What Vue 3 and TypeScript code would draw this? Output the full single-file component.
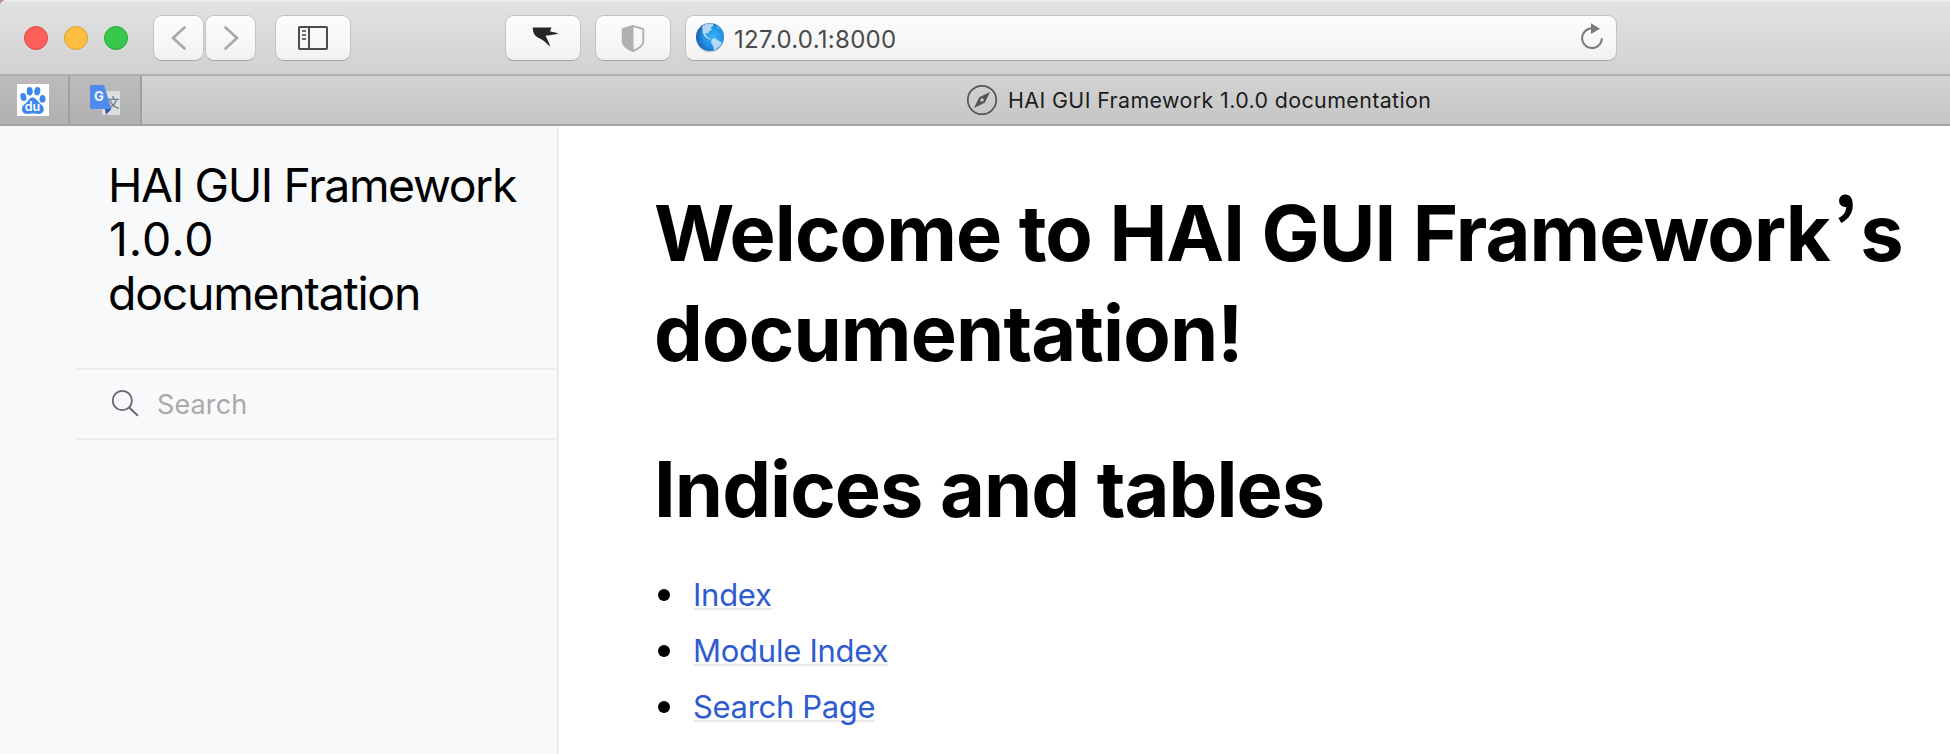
<script setup lang="ts">
interface DocLink {
  label: string
  spacing: string
}

const lights = ['red', 'amber', 'green']
const titleLines = [
  { text: 'HAI GUI Framework', spacing: 'title-a' },
  { text: '1.0.0', spacing: 'title-b' },
  { text: 'documentation', spacing: 'title-c' },
]
const links: DocLink[] = [
  { label: 'Index', spacing: 'normal' },
  { label: 'Module Index', spacing: 'normal' },
  { label: 'Search Page', spacing: 'tight' },
]
</script>

<template>
  <div class="window">
    <header class="toolbar">
      <span class="corner"></span>
      <div class="lights">
        <i v-for="l in lights" :key="l" :class="['light', l]"></i>
      </div>
      <div class="btn nav">
        <svg width="50" height="44" viewBox="0 0 50 44"><path d="M30.500 11.500 19 22l11.500 10.500" fill="none" stroke="#a9a9a9" stroke-width="2.700" stroke-linecap="round" stroke-linejoin="round" /></svg>
      </div>
      <div class="btn nav fwd">
        <svg width="50" height="44" viewBox="0 0 50 44"><path d="M19.500 11.500 31 22 19.500 32.500" fill="none" stroke="#a9a9a9" stroke-width="2.700" stroke-linecap="round" stroke-linejoin="round" /></svg>
      </div>
      <div class="btn panel">
        <svg width="32" height="26" viewBox="0 0 32 26">
          <rect x="2" y="2" width="28" height="22" rx="0.800" fill="none" stroke="#4c4c4c" stroke-width="2" />
          <path d="M12 2v22" stroke="#4c4c4c" stroke-width="2" />
          <path d="M5 6h4M5 10h4M5 14h4" stroke="#6a6a6a" stroke-width="1.800" />
        </svg>
      </div>
      <div class="btn bird">
        <svg width="74" height="44" viewBox="0 0 74 44">
          <path d="M26.800 11.500H45.500L44 15.300C46.500 16.200 49.500 16.500 52.500 17.600C49 18.900 45 19 39.500 19.800C41 22.500 42.700 26.500 44.300 30.800C41 28 38.500 25 34.500 22.800C29.500 20.800 26.600 17.500 26.800 11.500Z" fill="#262626" />
        </svg>
      </div>
      <div class="btn shield">
        <svg width="74" height="44" viewBox="0 0 74 44">
          <path d="M37 9.900 47.300 13.200V25.500C47.300 29.500 43 32.500 37 35C31 32.500 26.700 29.500 26.700 25.500V13.200Z" fill="none" stroke="#b0b0b0" stroke-width="1.900" stroke-linejoin="round" />
          <path d="M37.500 9 26 12.600V25.500C26 30 31 33.500 37.500 36Z" fill="#b0b0b0" />
        </svg>
      </div>
      <div class="address">
        <svg class="globe" width="32" height="34" viewBox="0 0 32 34">
          <defs>
            <radialGradient id="sea" cx="0.62" cy="0.5" r="0.62">
              <stop offset="0" stop-color="#38b1f6" />
              <stop offset="0.6" stop-color="#2190e4" />
              <stop offset="1" stop-color="#1a5fae" />
            </radialGradient>
            <clipPath id="ball"><circle cx="16" cy="16" r="14" /></clipPath>
          </defs>
          <ellipse cx="16" cy="18" rx="13.500" ry="13.300" fill="#8a98a8" opacity="0.450" />
          <circle cx="16" cy="16" r="14" fill="url(#sea)" />
          <g clip-path="url(#ball)" fill="#d5e8f5">
            <path d="M8 5.500 12 2.500 19.500 2.500 19 5 16.500 6.500 18 8.500 15.500 10 14 12.500 11.500 12 12 14.500 14.500 16.500 17 18.300 15.500 18.500 11 16 8.500 11.500 8.500 8Z" opacity="0.800" />
            <path d="M18 17.800 21.500 17.300 25 20 28 21.500 26.500 24.500 23 27.500 20 30 19.500 26 17 21.500Z" opacity="0.800" />
            <path d="M22 4 25.500 7 24 8Z" opacity="0.450" />
          </g>
        </svg>
        <span class="url">127.0.0.1:8000</span>
        <svg class="reload" width="28" height="30" viewBox="0 0 28 30">
          <path d="M23.900 16.300A9.900 9.900 0 1 1 14 6.300" fill="none" stroke="#7b7b7b" stroke-width="2" />
          <path d="M13 1.300 22 6.800 13 12Z" fill="#7b7b7b" />
        </svg>
      </div>
    </header>

    <nav class="tabs">
      <div class="pin first">
        <svg width="32" height="32" viewBox="0 0 32 32">
          <rect width="32" height="32" fill="#fff" />
          <g fill="#3f87f0">
            <ellipse cx="12.700" cy="7.200" rx="3" ry="4.200" />
            <ellipse cx="20.300" cy="7.200" rx="3" ry="4.200" transform="rotate(8 20.300 7.200)" />
            <ellipse cx="6.300" cy="13" rx="3" ry="4" transform="rotate(-12 6.300 13)" />
            <ellipse cx="25.500" cy="14.800" rx="3" ry="3.900" />
            <path d="M15.600 13.500C18.500 13.500 20.500 17 23 19.500C26 22 27.500 24 26.500 27C25 31.500 19 29.500 15.600 29.500C12 29.500 7 31.500 5.300 27C4 23 6.500 21 9 19C11.500 17 12.500 13.500 15.600 13.500Z" />
          </g>
          <text x="15.500" y="27.300" text-anchor="middle" font-family="Inter, sans-serif" font-size="12.500" font-weight="600" fill="#fff">du</text>
        </svg>
      </div>
      <div class="pin second">
        <svg width="32" height="32" viewBox="0 0 32 32">
          <rect x="13" y="7" width="18" height="24" rx="1.800" fill="#dedede" />
          <text x="24" y="23" text-anchor="middle" font-family="'Noto Sans CJK SC', sans-serif" font-size="13" font-weight="500" fill="#6f8188">文</text>
          <path d="M16 25H22.500L17 30.700Z" fill="#3b53b5" />
          <path d="M2.500 1H15L22.500 25H2.500Q1 25 1 23.200V2.800Q1 1 2.500 1Z" fill="#4e8bef" />
          <text x="9.900" y="17.200" text-anchor="middle" font-family="Inter, sans-serif" font-size="13" font-weight="700" fill="#f3f6fc">G</text>
        </svg>
      </div>
      <div class="active">
        <svg width="32" height="32" viewBox="0 0 32 32">
          <circle cx="16" cy="16" r="14.200" fill="none" stroke="#555" stroke-width="1.700" />
          <path d="M24 8 18.800 18.800 8 24 13.200 13.200Z" fill="#555" />
          <circle cx="16" cy="16" r="1.700" fill="#cbcbcb" />
        </svg>
        <span>HAI GUI Framework 1.0.0 documentation</span>
      </div>
    </nav>

    <div class="page">
      <aside class="sidebar">
        <div class="title">
          <div v-for="t in titleLines" :key="t.text" :class="t.spacing">{{ t.text }}</div>
        </div>
        <div class="search">
          <svg width="30" height="30" viewBox="0 0 30 30">
            <circle cx="12.300" cy="11.500" r="9.600" fill="none" stroke="#65656d" stroke-width="1.800" />
            <path d="M19.200 18.500 27.300 26.300" stroke="#65656d" stroke-width="1.900" stroke-linecap="round" />
          </svg>
          <span>Search</span>
        </div>
      </aside>

      <main class="content">
        <h1>
          <div class="line-a">Welcome to HAI GUI Framework<span class="quote">’</span>s</div>
          <div class="line-b">documentation!</div>
        </h1>
        <h2>Indices and tables</h2>
        <ul>
          <li v-for="l in links" :key="l.label">
            <i class="dot"></i><a :class="l.spacing">{{ l.label }}</a>
          </li>
        </ul>
      </main>
    </div>
  </div>
</template>

<style>
body {
  margin: 0;
  background: #fff;
}
</style>

<style scoped>
.window {
  width: 1950px;
  height: 754px;
  overflow: hidden;
  display: flex;
  flex-direction: column;
  font-family: Inter, 'Liberation Sans', sans-serif;
  color: #000;
}
svg {
  display: block;
  flex: none;
}
.toolbar {
  position: relative;
  box-sizing: border-box;
  height: 76px;
  flex: none;
  display: flex;
  align-items: flex-start;
  padding: 15px 0 0 24px;
  background: linear-gradient(#f2f2f2 0, #e2e2e2 2px, #d1d1d1 74px);
  border-bottom: 2px solid #b0b0b0;
}
.corner {
  position: absolute;
  left: 0;
  top: 0;
  width: 8px;
  height: 6px;
  background: radial-gradient(circle at 8px 8px, transparent 8px, #b98c8c 9.500px);
}
.lights {
  display: flex;
  gap: 16px;
  margin: 11px 25px 0 0;
}
.light {
  box-sizing: border-box;
  width: 24px;
  height: 24px;
  border-radius: 50%;
}
.red {
  background: #fc605b;
  border: 1px solid #df4744;
}
.amber {
  background: #fdbe41;
  border: 1px solid #de9f34;
}
.green {
  background: #35c84a;
  border: 1px solid #27a935;
}
.btn,
.address {
  box-sizing: border-box;
  height: 46px;
  border: 1px solid #c3c3c3;
  border-bottom-color: #a5a5a5;
  border-radius: 9px;
  background: linear-gradient(#fdfdfd, #f2f2f2);
  display: flex;
  align-items: center;
  justify-content: center;
  flex: none;
}
.nav {
  width: 51px;
}
.fwd {
  margin-left: 1px;
}
.panel {
  width: 76px;
  margin-left: 19px;
}
.bird {
  width: 76px;
  margin-left: 154px;
}
.shield {
  width: 76px;
  margin-left: 14px;
}
.address {
  width: 932px;
  margin-left: 14px;
  justify-content: flex-start;
  padding: 0 10px 0 8px;
}
.url {
  flex: 1;
  margin-left: 8px;
  font-size: 24px;
  line-height: 30px;
  letter-spacing: 0.285px;
  color: #4a4a4a;
  padding-top: 3px;
}
.reload {
  margin-bottom: 2px;
}
.tabs {
  box-sizing: border-box;
  height: 50px;
  flex: none;
  display: flex;
  background: linear-gradient(#d3d3d3, #c6c6c6);
  border-bottom: 2px solid #a3a3a3;
}
.pin {
  box-sizing: border-box;
  height: 48px;
  display: flex;
  align-items: center;
  background: linear-gradient(#bcbcbc, #b1b1b1);
  border-right: 2px solid #9f9f9f;
}
.first {
  width: 70px;
  padding-left: 17px;
}
.second {
  width: 72px;
  padding-left: 19px;
}
.active {
  flex: 1;
  display: flex;
  align-items: center;
  padding-left: 824px;
  font-size: 21.400px;
  line-height: 28px;
  letter-spacing: 0.390px;
  color: #1c1c1c;
}
.active span {
  margin-left: 10px;
}
.page {
  flex: 1;
  display: flex;
}
.sidebar {
  box-sizing: border-box;
  width: 559px;
  flex: none;
  padding: 32px 0 0 77px;
  background: #f8f9fb;
  border-right: 2px solid #ebebed;
}
.title {
  padding: 0 0 48px 31px;
  font-size: 46.400px;
  line-height: 54px;
  white-space: nowrap;
}
.title-a {
  letter-spacing: -1.390px;
}
.title-b {
  letter-spacing: 1px;
  margin-left: 1px;
}
.title-c {
  letter-spacing: -1.250px;
}
.search {
  box-sizing: border-box;
  height: 72px;
  border-top: 2px solid #ebebed;
  border-bottom: 2px solid #ebebed;
  display: flex;
  align-items: center;
  padding-left: 33px;
  font-size: 27px;
  line-height: 36px;
  letter-spacing: 0.120px;
  color: #a9a9a9;
}
.search span {
  margin: 2px 0 0 17px;
}
.content {
  padding: 57px 0 0 97px;
  white-space: nowrap;
}
h1,
h2 {
  margin: 0 0 0 -2px;
  font-size: 77.500px;
  line-height: 100px;
  font-weight: 700;
}
h2 {
  margin: 56px 0 28px -2px;
  letter-spacing: -0.930px;
}
.line-a {
  height: 100px;
  letter-spacing: -0.930px;
}
.line-b {
  letter-spacing: -0.845px;
}
.quote {
  display: inline-block;
  width: 30.500px;
  line-height: 40px;
  letter-spacing: 0;
  text-align: center;
  vertical-align: 5px;
  font-family: 'Noto Sans CJK JP', sans-serif;
}
ul {
  list-style: none;
  margin: 0;
  padding: 0;
}
li {
  height: 56px;
  line-height: 56px;
  font-size: 31px;
  display: flex;
  align-items: center;
}
.dot {
  width: 12px;
  height: 12px;
  margin: 0 23px 0 2px;
  border-radius: 50%;
  background: #000;
}
a {
  color: #2f5bd0;
  height: 56px;
  background: linear-gradient(#e9e9ee, #e9e9ee) 0 41px / 100% 2px no-repeat;
}
.normal {
  letter-spacing: -0.250px;
}
.tight {
  letter-spacing: -0.330px;
}
</style>
